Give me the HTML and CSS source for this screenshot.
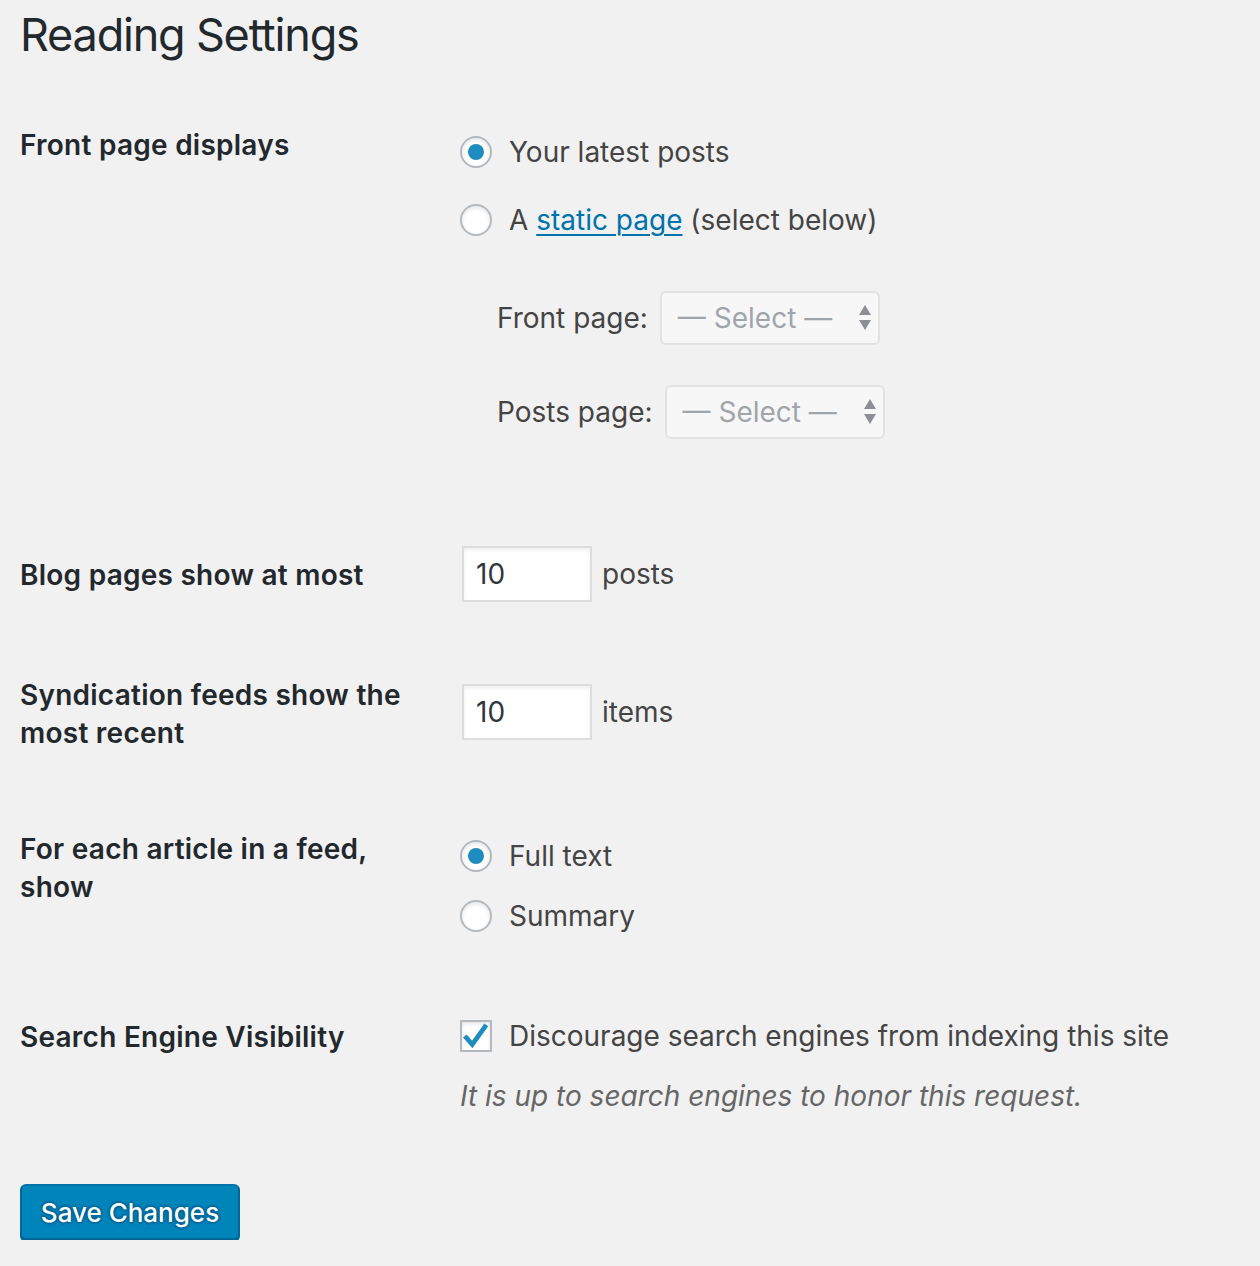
FILE: index.html
```html
<!DOCTYPE html>
<html lang="en">
<head>
<meta charset="utf-8">
<title>Reading Settings</title>
<link rel="stylesheet" href="styles.css">
</head>
<body>
<div class="wrap">
  <h1 class="title">Reading Settings</h1>

  <div class="form-table">
    <div class="row row-front">
      <div class="th">Front page displays</div>
      <div class="td td-front">
        <label class="choice"><span class="radio checked"></span><span>Your latest posts</span></label>
        <label class="choice second"><span class="radio"></span><span>A <a href="#" class="link">static page</a> (select below)</span></label>
        <div class="page-select first-select">
          <span class="sel-label">Front page:</span>
          <span class="select">— Select —<svg class="arrows" width="14" height="28" viewBox="0 0 14 28"><path d="M7 1 L13 11 L1 11 Z" fill="#8c8f94"/><path d="M1 16 L13 16 L7 26 Z" fill="#8c8f94"/></svg></span>
        </div>
        <div class="page-select second-select">
          <span class="sel-label">Posts page:</span>
          <span class="select">— Select —<svg class="arrows" width="14" height="28" viewBox="0 0 14 28"><path d="M7 1 L13 11 L1 11 Z" fill="#8c8f94"/><path d="M1 16 L13 16 L7 26 Z" fill="#8c8f94"/></svg></span>
        </div>
      </div>
    </div>

    <div class="row row-blog">
      <div class="th th-blog">Blog pages show at most</div>
      <div class="td inline-field">
        <span class="num-input">10</span><span class="unit">posts</span>
      </div>
    </div>

    <div class="row row-feed">
      <div class="th">Syndication feeds show the most recent</div>
      <div class="td td-feed inline-field">
        <span class="num-input">10</span><span class="unit">items</span>
      </div>
    </div>

    <div class="row row-article">
      <div class="th">For each article in a feed, show</div>
      <div class="td td-article">
        <label class="choice"><span class="radio checked"></span><span>Full text</span></label>
        <label class="choice summary"><span class="radio"></span><span>Summary</span></label>
      </div>
    </div>

    <div class="row row-search">
      <div class="th">Search Engine Visibility</div>
      <div class="td">
        <label class="choice"><span class="checkbox"><svg width="30" height="30" viewBox="0 0 30 30"><path d="M3 15 L11 24 L26 3" fill="none" stroke="#1e8cbe" stroke-width="5" stroke-linejoin="miter"/></svg></span><span>Discourage search engines from indexing this site</span></label>
        <p class="description">It is up to search engines to honor this request.</p>
      </div>
    </div>
  </div>

  <div class="submit">
    <button class="button-primary" type="button">Save Changes</button>
  </div>
</div>
</body>
</html>
```

FILE: styles.css
```css
html, body {
  margin: 0;
  padding: 0;
  background: #f1f1f1;
}

body {
  font-family: Inter, "Noto Sans", "Liberation Sans", sans-serif;
  font-size: 28px;
  line-height: 36px;
  color: #444;
}

.wrap {
  padding: 0 20px;
}

.title {
  margin: 6px 0 0;
  font-size: 45px;
  line-height: 58px;
  font-weight: 400;
  color: #23282d;
  letter-spacing: -1.2px;
}

.form-table {
  display: flex;
  flex-direction: column;
}

.row {
  display: grid;
  grid-template-columns: 440px 1fr;
  align-items: start;
}

.th {
  width: 400px;
  font-weight: 600;
  color: #23282d;
  line-height: 38px;
  letter-spacing: 0.25px;
}

.row-front { margin-top: 62px; }
.td-front { padding-top: 8px; }

.choice {
  display: flex;
  align-items: center;
  gap: 17px;
  height: 36px;
  color: #444;
}

.choice.second { margin-top: 32px; }
.choice.summary { margin-top: 24px; }

.radio {
  box-sizing: border-box;
  width: 32px;
  height: 32px;
  border: 2px solid #b4b9be;
  border-radius: 50%;
  background: #fff;
  box-shadow: inset 0 2px 4px rgba(0,0,0,0.1);
  display: flex;
  align-items: center;
  justify-content: center;
  flex: none;
}

.radio.checked::after {
  content: "";
  width: 16px;
  height: 16px;
  border-radius: 50%;
  background: #1e8cbe;
}

.checkbox {
  box-sizing: border-box;
  width: 32px;
  height: 32px;
  border: 2px solid #b4b9be;
  background: #fff;
  box-shadow: inset 0 2px 4px rgba(0,0,0,0.1);
  display: flex;
  align-items: center;
  justify-content: center;
  flex: none;
}

.link {
  color: #0073aa;
  text-decoration: underline;
  text-underline-offset: 4px;
  text-decoration-thickness: 2px;
}

.page-select {
  display: flex;
  align-items: center;
  gap: 12px;
  padding-left: 37px;
  color: #444;
}

.first-select { margin-top: 53px; }
.second-select { margin-top: 40px; }

.select {
  box-sizing: border-box;
  width: 220px;
  height: 54px;
  border: 2px solid #e2e2e2;
  border-radius: 6px;
  background: #f7f7f7;
  color: #a0a5aa;
  display: flex;
  align-items: center;
  justify-content: space-between;
  padding: 0 6px 0 16px;
}

.arrows { flex: none; }

.row-blog { margin-top: 107px; }
.th-blog { padding-top: 10px; }

.inline-field {
  display: flex;
  align-items: center;
  gap: 10px;
}

.num-input {
  box-sizing: border-box;
  width: 130px;
  height: 56px;
  margin-left: 2px;
  border: 2px solid #ddd;
  background: #fff;
  box-shadow: inset 0 2px 4px rgba(0,0,0,0.07);
  color: #32373c;
  display: flex;
  align-items: center;
  padding-left: 12px;
}

.unit { color: #444; }

.row-feed { margin-top: 74px; }
.td-feed { padding-top: 8px; }

.row-article { margin-top: 78px; }
.td-article { padding-top: 8px; }

.row-search { margin-top: 84px; }

.description {
  margin: 24px 0 0;
  font-style: italic;
  color: #666;
  line-height: 36px;
}

.submit {
  margin-top: 70px;
}

.button-primary {
  box-sizing: border-box;
  width: 220px;
  height: 56px;
  border: 2px solid #0073aa;
  border-color: #0073aa #006799 #006799;
  border-radius: 6px;
  background: #0085ba;
  color: #fff;
  font-family: inherit;
  font-size: 26px;
  font-weight: 500;
  box-shadow: 0 2px 0 #006799;
  text-shadow: 0 -2px 2px #006799, 2px 0 2px #006799, 0 2px 2px #006799, -2px 0 2px #006799;
  padding: 0;
  cursor: pointer;
}
```
